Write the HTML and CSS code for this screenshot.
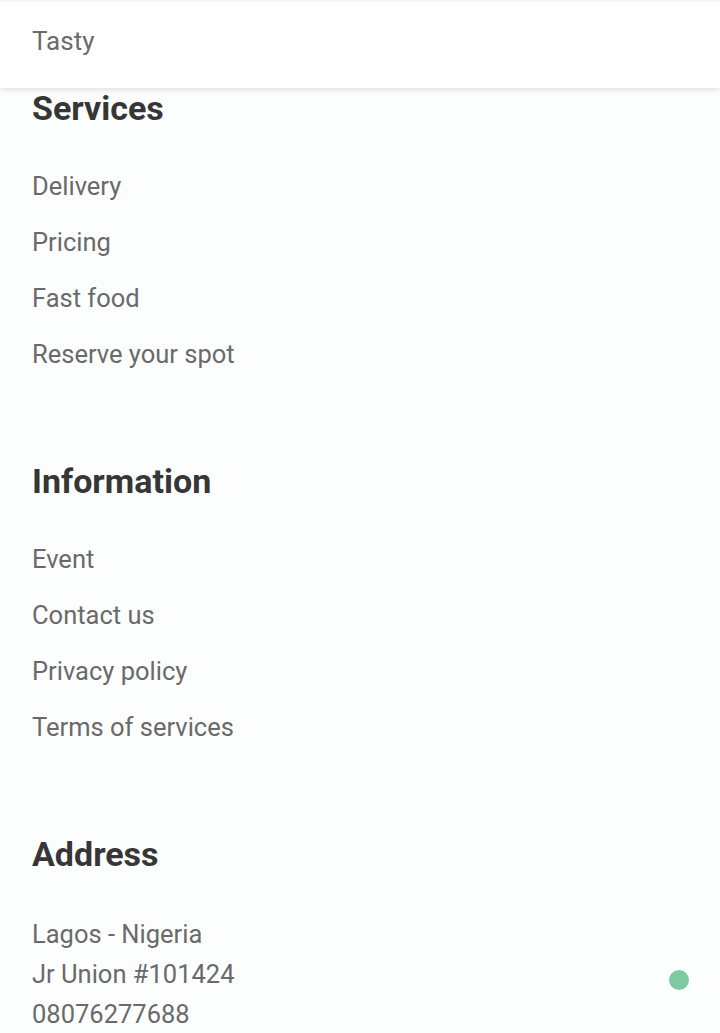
FILE: index.html
```html
<!DOCTYPE html>
<html lang="en">
<head>
<meta charset="utf-8">
<title>Tasty</title>
<link rel="stylesheet" href="styles.css">
</head>
<body>
<header class="topbar">
  <span class="brand">Tasty</span>
</header>
<main class="footer-content">
  <section class="block">
    <h2 class="block-title">Services</h2>
    <ul class="links">
      <li>Delivery</li>
      <li>Pricing</li>
      <li>Fast food</li>
      <li>Reserve your spot</li>
    </ul>
  </section>
  <section class="block">
    <h2 class="block-title">Information</h2>
    <ul class="links">
      <li>Event</li>
      <li>Contact us</li>
      <li>Privacy policy</li>
      <li>Terms of services</li>
    </ul>
  </section>
  <section class="block block-last">
    <h2 class="block-title">Address</h2>
    <div class="address">
      <p>Lagos - Nigeria</p>
      <p>Jr Union #101424</p>
      <p>08076277688</p>
    </div>
  </section>
</main>
<span class="dot"></span>
</body>
</html>
```

FILE: styles.css
```css
html, body {
  margin: 0;
  padding: 0;
}
body {
  background: #fcfefe;
  font-family: Roboto, "Liberation Sans", sans-serif;
  color: #6a6a6a;
  height: 1033px;
  overflow: hidden;
}
.topbar {
  height: 88px;
  background: #ffffff;
  box-shadow: 0 2px 6px rgba(0, 0, 0, 0.12);
  border-top: 2px solid #f3f4f4;
  box-sizing: border-box;
  display: flex;
  align-items: center;
  padding: 0 32px 8px;
  position: relative;
  z-index: 2;
}
.brand {
  font-size: 26px;
  color: #6b6b6b;
}
.footer-content {
  padding: 0 32px;
}
.block {
  margin-bottom: 87px;
}
.block-last {
  margin-bottom: 0;
}
.block-title {
  margin: 0 0 38px;
  font-size: 34px;
  line-height: 40px;
  font-weight: 700;
  color: #363636;
}
.links {
  list-style: none;
  margin: 0;
  padding: 0;
  display: flex;
  flex-direction: column;
  gap: 16px;
}
.links li {
  font-size: 25.5px;
  line-height: 40px;
}
.address {
  padding-top: 2px;
}
.address p {
  margin: 0;
  font-size: 25.5px;
  line-height: 40px;
}
.dot {
  position: fixed;
  right: 31px;
  bottom: 43px;
  width: 20px;
  height: 20px;
  border-radius: 50%;
  background: #7dc9a1;
}
```
